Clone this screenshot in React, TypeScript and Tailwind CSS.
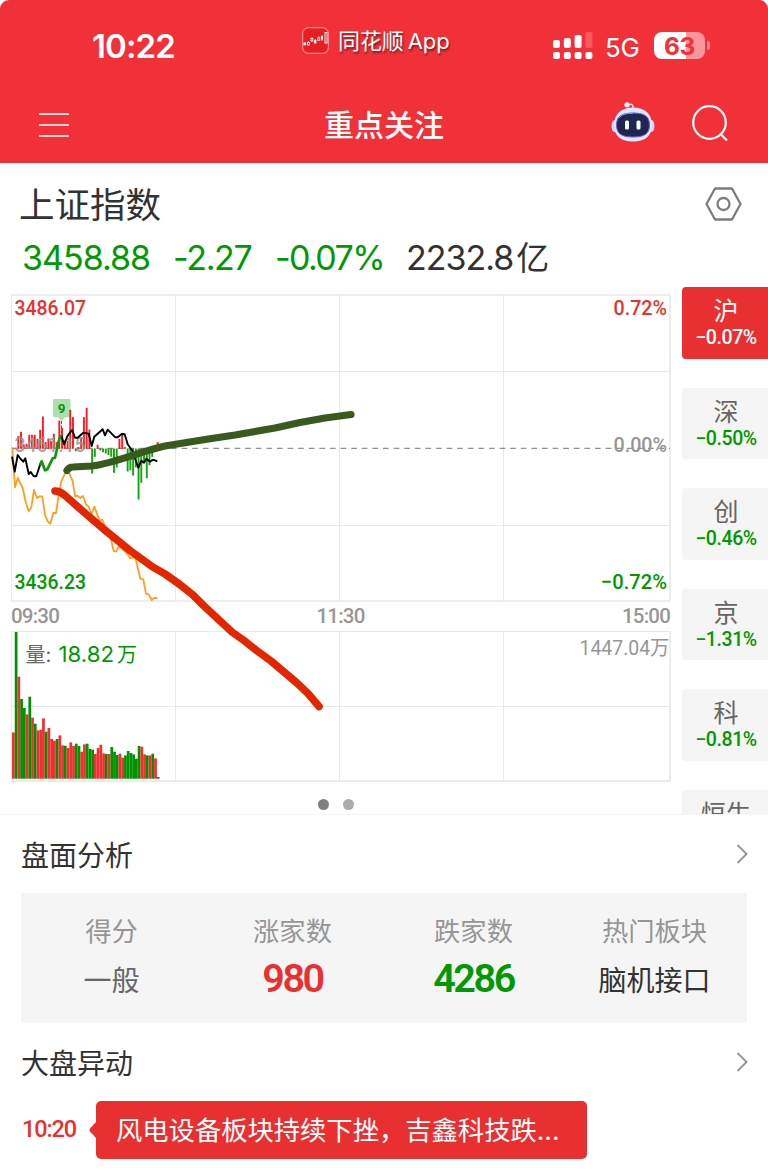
import { useState } from 'react';

const STEP = 2.733;

// height of each minute bar, one colour letter per bar
const volumeHeights = [
  46.3, 146.7, 102, 79.7, 70.7, 64.3, 82, 61, 55, 48.3, 49, 60.3, 47, 50.7, 39.7, 38, 39.7, 43.3,
  33.3, 33, 30.7, 36.3, 32.7, 35, 32.7, 27, 34.3, 35, 29.7, 29, 24.7, 30.7, 34, 25.3, 24.7, 24.7,
  31.7, 27, 23.7, 25, 21, 23.3, 27.7, 25.7, 24.3, 20, 32.7, 32, 24.3, 23.3, 23.3, 25, 20.3, 1.7,
];
const volumeColors = 'RGRGGRGRGRRRGRRRGRRGRRRGGRRGGGRRRRGRGGGRRGGGGGGRRGRGRG';

// positive = buying strength above the middle line, negative = below
const strength = [
  1, 1, 12.7, 17, 4.5, 5, 14, 14, 14, 10, 19, 32.3, 6.7, 10.3, 7.7, 15, 6.7, 28.3, 21, 8.3, 8, 39,
  31.7, -2.7, 1.7, 11, 31.7, 41, 19.3, -25, -8.3, 4, -2, -3.7, -5, -6.7, -8.3, -24.3, -19, 10,
  15.7, 1.7, -23, -21.7, -27, -19, -51, -34.3, -13.3, -29.7, -16.7, -8.3, -2, 6.7,
];

const tabs = [
  { name: '沪', change: '−0.07%' },
  { name: '深', change: '−0.50%' },
  { name: '创', change: '−0.46%' },
  { name: '京', change: '−1.31%' },
  { name: '科', change: '−0.81%' },
  { name: '恒生', change: '' },
];

const stats = [
  { label: '得分', value: '一般', cls: 'pt-[2px] text-[28px] text-[#666]' },
  { label: '涨家数', value: '980', cls: "text-[39.5px] font-semibold tracking-[-2.4px] text-[#e93030] font-['Roboto','Noto_Sans_CJK_SC',sans-serif]" },
  { label: '跌家数', value: '4286', cls: "text-[39.5px] font-semibold tracking-[-2.4px] text-[#009900] font-['Roboto','Noto_Sans_CJK_SC',sans-serif]" },
  { label: '热门板块', value: '脑机接口', cls: 'pt-[2px] text-[28px] text-[#323232]' },
];

function StatusBar() {
  return (
    <div className="flex h-[84px] items-start text-white">
      <div className="ml-[92px] mt-[26px] w-[210px] text-[33px] font-semibold leading-[40px] tracking-[-0.9px]">10:22</div>
      <svg className="mt-[27px] h-[27px] w-[27px]" viewBox="0 0 27 27">
        <rect x="0.6" y="0.6" width="25.8" height="25.8" rx="6" fill="#e51f22" stroke="#f98f90" strokeWidth="1.2" />
        <path d="M6.500 14v5M10 10v5M13.200 12v5M16.800 9v5M20 8v6" stroke="#fff" strokeWidth="0.6" fill="none" />
        <rect x="1.500" y="15.500" width="2.600" height="2.800" fill="#fff" />
        <rect x="5.500" y="15.500" width="2" height="2.500" fill="#e51f22" stroke="#fff" strokeWidth="0.8" />
        <rect x="8.900" y="11.500" width="2" height="2.500" fill="#e51f22" stroke="#fff" strokeWidth="0.8" />
        <rect x="12" y="13.200" width="2.400" height="3" fill="#fff" />
        <rect x="15.800" y="10.800" width="2" height="2.500" fill="#e51f22" stroke="#fff" strokeWidth="0.8" />
        <rect x="19" y="9" width="2" height="3.500" fill="#fff" />
        <rect x="23" y="5.500" width="2" height="10.500" fill="#e51f22" stroke="#fff" strokeWidth="0.9" />
      </svg>
      <div className="ml-[9px] mt-[26px] w-[215px] text-[22px] leading-[30px] tracking-[-0.1px] [text-shadow:1px_2px_2px_rgba(0,0,0,0.45)]">同花顺<span className="ml-[4px]">App</span></div>
      <svg className="mt-[34px] h-[26px] w-[40px] overflow-visible" viewBox="0 0 40 26" fill="#fff">
        <rect x="0" y="6" width="7" height="8" rx="2" />
        <rect x="10.800" y="4" width="7" height="10" rx="2" />
        <rect x="21.600" y="1" width="7" height="13" rx="2" />
        <rect x="32.400" y="-2" width="7" height="16" rx="2" opacity="0.2" />
        <rect x="0" y="18" width="7" height="7" rx="2" />
        <rect x="10.800" y="18" width="7" height="7" rx="2" />
        <rect x="21.600" y="18" width="7" height="7" rx="2" />
        <rect x="32.400" y="18" width="7" height="7" rx="2" />
      </svg>
      <div className="ml-[12px] mt-[32px] w-[49px] text-[26px] leading-[31px] tracking-[-0.2px]">5G</div>
      <div className="mt-[32px] flex h-[27px] w-[51px] items-center justify-center rounded-[8px] bg-[linear-gradient(90deg,#fff_0_63%,#f89699_63%)] pt-[1px] text-[24.500px] font-bold tracking-[-0.4px] text-[#f13038]">63</div>
      <div className="ml-[2px] mt-[41px] h-[9px] w-[3px] rounded-r-full bg-[#f8888b]" />
    </div>
  );
}

function Robot() {
  return (
    <svg className="mt-[-3px] h-[42px] w-[44px]" viewBox="0 0 44 42">
      <path d="M17 4C20 2.500 22.500 3.500 22 7" fill="none" stroke="#dfe6fb" strokeWidth="1.500" />
      <circle cx="16" cy="3.800" r="2.600" fill="#e8eefc" />
      <ellipse cx="3.500" cy="25" rx="3" ry="6" fill="#cfd5fa" />
      <ellipse cx="40.500" cy="25" rx="3" ry="6" fill="#cfd5fa" />
      <path d="M22 6.500C34 6.500 41 13 41 24S34 40.500 22 40.500 3 35 3 24 10 6.500 22 6.500Z" fill="#e3e5fb" />
      <path d="M22 12c11 0 16.500 3 16.500 12S33 36 22 36 5.500 33 5.500 24 11 12 22 12Z" fill="#1d2752" stroke="#6a5fdc" strokeWidth="1" />
      <path d="M8 17c3-4 8-4.800 14-4.800" fill="none" stroke="#6bb8ee" strokeWidth="1" />
      <rect x="14" y="19.500" width="4" height="9" rx="1.500" fill="#fff" />
      <rect x="25.500" y="19.500" width="4" height="9" rx="1.500" fill="#fff" />
    </svg>
  );
}

function NavBar() {
  return (
    <div className="flex h-[79px] items-center text-white">
      <div className="ml-[39px] flex w-[285px] flex-col gap-[9px] pt-[3px]">
        <div className="h-[2px] w-[30px] bg-white/80" />
        <div className="h-[2px] w-[30px] bg-white/80" />
        <div className="h-[2px] w-[30px] bg-white/80" />
      </div>
      <h1 className="w-[287px] pt-[4px] text-[30px] font-medium">重点关注</h1>
      <Robot />
      <svg className="ml-[37px] mt-[-1px] h-[36px] w-[36px]" viewBox="0 0 36 36" fill="none" stroke="#fff" strokeWidth="2.200">
        <circle cx="17.500" cy="17.500" r="16.300" />
        <path d="M28 28.500L35 35.500" />
      </svg>
    </div>
  );
}

function Summary() {
  return (
    <div className="h-[124px] pt-[18px]">
      <div className="flex items-center justify-between pl-[19px] pr-[26px]">
        <h2 className="text-[35.5px] leading-[50px] text-[#323232]">上证指数</h2>
        <svg className="mt-[-5px] h-[34px] w-[37px]" viewBox="0 0 37 34" fill="none" stroke="#7d7d7d" strokeWidth="2.300" strokeLinejoin="round">
          <path d="M10 1.500H27L35.500 17L27 32.500H10L1.500 17Z" />
          <circle cx="18.500" cy="17" r="6" />
        </svg>
      </div>
      <div className="mt-[3px] flex pl-[22px] text-[34px] leading-[48px] tracking-[-1px] text-[#009900]">
        <div className="w-[151px]">3458.88</div>
        <div className="w-[102px] tracking-[-1.3px]">-2.27</div>
        <div className="w-[131px] tracking-[-1.6px]">-0.07%</div>
        <div className="text-[#323232]">2232.8<span className="ml-[3px] text-[33px]">亿</span></div>
      </div>
    </div>
  );
}

function PriceChart() {
  return (
    <svg className="block h-[316px] w-[676px]" viewBox="0 288 676 316" fontFamily="Roboto, 'Noto Sans CJK SC', sans-serif" fontSize="21" fontWeight="500">
      <g stroke="#e9e9e9" fill="none">
        <path d="M11.500 294.500V601M175.500 295V601M339.500 295V601M503.500 295V601M11 371.500H670M11 525.500H670" />
        <path d="M11 295H670V601H11" strokeWidth="1.700" />
      </g>
      <path d="M12 448.300H670" stroke="#777" strokeDasharray="5.700 4.900" />
      <text x="613.500" y="452" textLength="53.500" lengthAdjust="spacingAndGlyphs" fill="#969696">0.00%</text>
      {strength.map((h, i) => (
        <rect
          key={i}
          x={11.9 + i * STEP}
          y={h > 0 ? 448.8 - h : 448.5}
          width={1.9}
          height={Math.abs(h)}
          fill={h > 0 ? '#fb1c24' : '#14a314'}
        />
      ))}
      <text x="14.500" y="452" textLength="71" lengthAdjust="spacingAndGlyphs" fill="#969696" fillOpacity="0.85">3461.15</text>
      <polyline
        points="12.300,447.700 15,487.300 17.700,478 22.700,488 26,503.300 28.700,511.300 31.300,507.300 34,490 37,498 39.700,496.300 42.300,496.300 45,515 47.700,521.300 50.300,523.700 53.300,513 56,513 59,493.300 61.300,481.700 65.700,471.700 69,472.700 72.700,481.300 75,496 77.700,496 80.300,498 83,496 86,504.300 88.700,506.700 91.300,514.700 94.300,506.700 99.700,520.700 102.300,519.700 105,526.700 110,535 113.700,551.300 116.300,551.300 119,546 127.700,554 130,558 135.300,557.300 140.300,578.700 143.300,579.300 146,593.700 148.700,594.300 151.700,600 154.300,598 157.300,598"
        fill="none" stroke="#ff9f1c" strokeWidth="1.800" strokeLinejoin="round"
      />
      <polyline
        points="12,456.700 14.700,471.700 17.700,455 20.700,459 23.300,461.700 25.300,458.300 28.700,474 30.700,472 33.700,476.300 36.300,476.300 40,465 41.700,461.300"
        fill="none" stroke="#000" strokeWidth="1.900" strokeLinejoin="round"
      />
      <polyline
        points="61.300,435 64,444.300 67,437 69.300,433.300 72.300,430 75,437.700 77.700,437.700 80.700,435 83.300,432.700 88.700,433.700 91.700,446 94.300,436.700 102.700,429.300 105,435.300 107.700,429.700 115.300,437.300 117.700,437.300 121.700,434 124.700,434.300 127.700,444.300 132.300,450.700 138.300,467.700 141.300,460.700 144,462.700 146.300,458.700 150,461.700 152.300,460 154.300,460 157.300,461.300"
        fill="none" stroke="#000" strokeWidth="1.900" strokeLinejoin="round"
      />
      <polyline
        points="40,465 41.700,461.300 45,470.300 47.300,469.300 52.700,458.300 55,457.700 59.300,439 61.300,435"
        fill="none" stroke="#0c970c" strokeWidth="2.700" strokeLinejoin="round"
      />
      <path d="M61.500 421V434" stroke="#0c970c" strokeDasharray="3 1.500" />
      <path d="M54 399H69.500Q70.500 399 70.500 400V416Q70.500 417 69.500 417H65L61.500 421L58 417H54Q53 417 53 416V400Q53 399 54 399Z" fill="#009900" fillOpacity="0.32" />
      <text x="57.700" y="413.200" fontSize="13.500" fontWeight="700" fill="#099409">9</text>
      <text x="14.500" y="315.200" textLength="71.500" lengthAdjust="spacingAndGlyphs" fill="#e93030">3486.07</text>
      <text x="613.500" y="315.200" textLength="53.500" lengthAdjust="spacingAndGlyphs" fill="#e93030">0.72%</text>
      <text x="14.500" y="589" textLength="71.500" lengthAdjust="spacingAndGlyphs" fill="#009900">3436.23</text>
      <text x="601" y="589" textLength="66" lengthAdjust="spacingAndGlyphs" fill="#009900">−0.72%</text>
    </svg>
  );
}

function VolumeChart() {
  return (
    <svg className="block h-[156px] w-[676px]" viewBox="0 628 676 156">
      <g stroke="#e9e9e9" fill="none">
        <path d="M11.500 631V781M175.500 631V781M339.500 631V781M503.500 631V781M11 706.500H670M11 631.500H670" />
        <path d="M11 781.200H670V631" strokeWidth="1.700" />
      </g>
      {volumeHeights.map((h, i) => (
        <rect key={i} x={12 + i * STEP} y={778.7 - h} width={2.75} height={h} fill={volumeColors[i] === 'R' ? '#ee3032' : '#009200'} />
      ))}
      <g fontFamily="Inter, 'Noto Sans CJK SC', sans-serif" fontSize="20">
        <text x="25.500" y="661.500" fill="#666">量:</text>
        <text x="58.500" y="661.500" textLength="55.500" lengthAdjust="spacingAndGlyphs" fontSize="21.500" fill="#009900">18.82</text>
        <text x="117" y="661.500" fill="#009900">万</text>
      </g>
      <text x="579.500" y="654.500" textLength="90" lengthAdjust="spacingAndGlyphs" fontFamily="Roboto, 'Noto Sans CJK SC', sans-serif" fontSize="20.500" fill="#969696">1447.04万</text>
    </svg>
  );
}

function Charts() {
  return (
    <div className="relative mt-px w-[676px]">
      <PriceChart />
      <div className="flex h-[24px] items-center justify-between pl-[11px] pr-[6px] font-['Roboto','Noto_Sans_CJK_SC',sans-serif] text-[20.5px] font-medium tracking-[-0.8px] text-[#969696]">
        <span>09:30</span>
        <span>11:30</span>
        <span>15:00</span>
      </div>
      <VolumeChart />
      <div className="flex h-[30px] justify-center gap-[14px] pt-[15px] pr-[5px]">
        <span className="h-[11px] w-[11px] rounded-full bg-[#7f7f7f]" />
        <span className="h-[11px] w-[11px] rounded-full bg-[#acacac]" />
      </div>
      {/* hand drawn trend lines, run over both panels */}
      <svg className="absolute left-0 top-0 h-[496px] w-[676px]" viewBox="0 288 676 496" fill="none" strokeLinecap="round" strokeLinejoin="round">
        <path d="M67 470.500Q69 467 73 467L92 466C115 463 145 450 165 446L205 439.500L235 435L275 428L300 422.500L325 418L351 414.500" stroke="#3a591c" strokeWidth="7.200" />
        <path d="M55 491Q60 491 65 495.500L86 514L106 531L130 550.500L152 566.500L165 574C180 584 187 590 193 595L204 606L232 632L244 640.500L256 650L271 661L297 683L308 693.500L319 706.500" stroke="#e32600" strokeWidth="7.600" />
      </svg>
    </div>
  );
}

function SectionTitle({ title }: { title: string }) {
  return (
    <div className="flex h-[78px] items-center justify-between pl-[21px] pr-[20px]">
      <h3 className="pt-[3px] text-[28px] text-[#323232]">{title}</h3>
      <svg className="mt-[-1px] h-[20px] w-[12px]" viewBox="0 0 12 20" fill="none" stroke="#969696" strokeWidth="1.900">
        <path d="M1.500 1L10.500 10L1.500 19" />
      </svg>
    </div>
  );
}

export default function App() {
  const [active, setActive] = useState(0);

  return (
    <div className="h-[1175px] w-[768px] overflow-hidden bg-white font-['Inter','Noto_Sans_CJK_SC',sans-serif]">
      <header className="h-[163px] rounded-t-[9px] bg-[#f13038]">
        <StatusBar />
        <NavBar />
      </header>

      <Summary />

      <div className="flex h-[528px] overflow-hidden border-b border-[#f5f5f5]">
        <Charts />
        <div className="ml-[6px] flex flex-1 flex-col gap-[29px] pt-[0.4px]">
          {tabs.map((t, i) => (
            <button
              key={t.name}
              onClick={() => setActive(i)}
              className={`flex h-[71.5px] shrink-0 flex-col items-center rounded-l-[4px] pl-[2px] pt-[8px] ${active === i ? 'bg-[#e93030] text-white' : 'bg-[#f5f5f5] text-[#666]'}`}
            >
              <span className="text-[25px] leading-[32px]">{t.name}</span>
              <span className={`font-['Roboto','Noto_Sans_CJK_SC',sans-serif] text-[19.5px] font-medium leading-[22px] tracking-[-0.4px] ${active === i ? 'text-white' : 'text-[#009900]'}`}>{t.change}</span>
            </button>
          ))}
        </div>
      </div>

      <SectionTitle title="盘面分析" />
      <div className="mx-[21px] grid h-[130px] grid-cols-4 bg-[#f5f5f5] pt-[19px] pr-[2px] text-center">
        {stats.map((s) => (
          <div key={s.label}>
            <div className="whitespace-nowrap text-[26.300px] leading-[40px] text-[#969696]">{s.label}</div>
            <div className={`mt-[2px] h-[50px] whitespace-nowrap leading-[50px] ${s.cls}`}>{s.value}</div>
          </div>
        ))}
      </div>

      <SectionTitle title="大盘异动" />
      <div className="flex items-center pl-[22px]">
        <span className="w-[67px] font-['Roboto','Noto_Sans_CJK_SC',sans-serif] text-[23.5px] font-medium tracking-[-1.1px] text-[#e93030]">10:20</span>
        <svg className="h-[16px] w-[7px]" viewBox="0 0 7 16" fill="#e93030">
          <path d="M7 0L1 6.500Q0 8 1 9.500L7 16Z" />
        </svg>
        <div className="h-[58px] w-[491px] rounded-[5px] bg-[#e93030] pl-[20px] pt-px text-[26.300px] leading-[58px] whitespace-nowrap text-white">风电设备板块持续下挫，吉鑫科技跌...</div>
      </div>
    </div>
  );
}
